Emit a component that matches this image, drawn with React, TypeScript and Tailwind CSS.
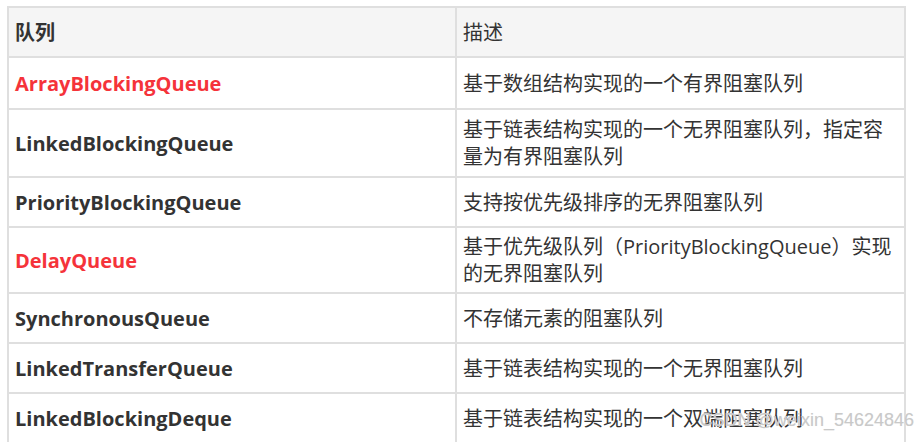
const rows: { name: string; desc: string; red?: boolean; h: string }[] = [
  { name: "ArrayBlockingQueue", desc: "基于数组结构实现的一个有界阻塞队列", red: true, h: "h-[52px]" },
  { name: "LinkedBlockingQueue", desc: "基于链表结构实现的一个无界阻塞队列，指定容量为有界阻塞队列", h: "h-[68px]" },
  { name: "PriorityBlockingQueue", desc: "支持按优先级排序的无界阻塞队列", h: "h-[50px]" },
  { name: "DelayQueue", desc: "基于优先级队列（PriorityBlockingQueue）实现的无界阻塞队列", red: true, h: "h-[66px]" },
  { name: "SynchronousQueue", desc: "不存储元素的阻塞队列", h: "h-[50px]" },
  { name: "LinkedTransferQueue", desc: "基于链表结构实现的一个无界阻塞队列", h: "h-[50px]" },
  { name: "LinkedBlockingDeque", desc: "基于链表结构实现的一个双端阻塞队列", h: "h-[50px]" },
];

export default function App() {
  return (
    <div className="relative w-[914px] h-[442px] overflow-hidden bg-white pt-[6px] pl-[7px] text-[#333] [font-family:'Open_Sans','Noto_Sans_CJK_SC',sans-serif]">
      <table className="w-[899px] border-collapse table-fixed text-[20px] leading-[27px]">
        <colgroup>
          <col className="w-[448px]" />
          <col />
        </colgroup>
        <thead>
          <tr className="h-[50px] bg-[#f5f5f5]">
            <th className="border-2 border-[#dfdfdf] px-[6px] text-left font-bold">队列</th>
            <th className="border-2 border-[#dfdfdf] px-[6px] text-left font-normal">描述</th>
          </tr>
        </thead>
        <tbody>
          {rows.map((r) => (
            <tr key={r.name} className={r.h}>
              <td className={`border-2 border-[#dfdfdf] px-[6px] font-bold ${r.red ? "text-[#f5333a]" : ""}`}>{r.name}</td>
              <td className="border-2 border-[#dfdfdf] px-[6px]">{r.desc}</td>
            </tr>
          ))}
        </tbody>
      </table>
      <div className="absolute right-0 bottom-[8px] text-[18px] text-[#c9c9c9] [font-family:'Liberation_Sans',sans-serif] [text-shadow:0_0_1px_#eee]">
        CSDN @weixin_54624846
      </div>
    </div>
  );
}
